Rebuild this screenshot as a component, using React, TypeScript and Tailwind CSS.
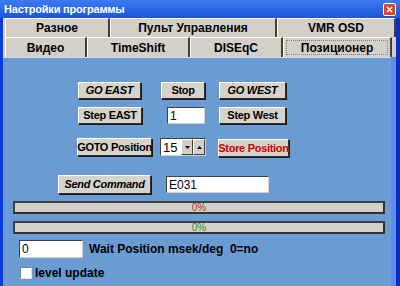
import React from 'react';

const font = { fontFamily: '"Liberation Sans", Arial, sans-serif' };

const Btn: React.FC<{ w: string; h?: string; italic?: boolean; red?: boolean; children: React.ReactNode; className?: string }> = ({
  w,
  h = 'h-[17px]',
  italic,
  red,
  children,
  className = '',
}) => (
  <button
    className={`${w} ${h} ${className} flex items-center justify-center whitespace-nowrap overflow-visible bg-[#d6d3cb] border border-t-white border-l-white border-r-[#303030] border-b-[#303030] shadow-[1px_1px_0_#1a1a1a] text-[11px] tracking-[-0.3px] font-bold leading-none ${
      italic ? 'italic' : ''
    } ${red ? 'text-[#d00000]' : 'text-black'}`}
  >
    {children}
  </button>
);

const Field: React.FC<{ w: string; h?: string; value: string; className?: string }> = ({ w, h = 'h-[17px]', value, className = '' }) => (
  <div
    className={`${w} ${h} ${className} bg-white border border-t-[#404040] border-l-[#404040] border-r-[#d0d0d0] border-b-[#d0d0d0] flex items-center pl-[2px] text-[12px] text-black leading-none`}
  >
    {value}
  </div>
);

const Tab: React.FC<{ w: string; label: string; active?: boolean }> = ({ w, label, active }) => (
  <div
    className={`${w} h-full flex items-center justify-center bg-[#d4d0c8] border-t border-l border-t-white border-l-white border-r-2 border-r-[#404040] text-[12px] font-bold text-black ${
      active ? 'p-[2px]' : ''
    }`}
  >
    {active ? (
      <div className="w-full h-full flex items-center justify-center border border-dotted border-[#8a8060]">{label}</div>
    ) : (
      label
    )}
  </div>
);

const Progress: React.FC<{ color: string }> = ({ color }) => (
  <div className="w-[372px] h-[13px] ml-[10px] bg-[#d4d0c8] border-2 border-t-[#404040] border-l-[#404040] border-r-[#303030] border-b-[#303030] flex items-center justify-center">
    <span className={`text-[10px] leading-none ${color}`}>0%</span>
  </div>
);

export default function App() {
  return (
    <div className="w-[400px] h-[286px] bg-[#0b3cd8] flex flex-col overflow-hidden" style={font}>
      <div className="h-[18px] flex items-center justify-between pl-[4px] pr-[4px] bg-gradient-to-b from-[#3d7bef] to-[#1d55dc]">
        <span className="text-[11px] font-bold text-white leading-none tracking-[-0.2px]">Настройки программы</span>
        <div className="w-[13px] h-[13px] bg-[#e0442a] border border-white rounded-[2px] flex items-center justify-center">
          <svg width="7" height="7" viewBox="0 0 7 7">
            <path d="M1 1 L6 6 M6 1 L1 6" stroke="white" strokeWidth="1.6" />
          </svg>
        </div>
      </div>
      <div className="flex-1 flex pl-[3px]">
        <div className="flex-1 flex flex-col">
          <div className="h-[39px] flex flex-col bg-[#d4d0c8] pl-[2px]">
            <div className="h-[19px] flex">
              <Tab w="w-[105px]" label="Разное" />
              <Tab w="w-[167px]" label="Пульт Управления" />
              <Tab w="w-[119px]" label="VMR OSD" />
            </div>
            <div className="h-[20px] flex">
              <Tab w="w-[82px]" label="Видео" />
              <Tab w="w-[103px]" label="TimeShift" />
              <Tab w="w-[93px]" label="DISEqC" />
              <Tab w="w-[109px]" label="Позиционер" active />
            </div>
          </div>
          <div className="flex-1 flex">
            <div className="flex-1 bg-[#6b9bd3] border-t border-t-[#c8dcf4] flex flex-col">
              <div className="flex mt-[24px] ml-[75px]">
                <Btn w="w-[63px]" italic>GO EAST</Btn>
                <Btn w="w-[44px]" className="ml-[20px]">Stop</Btn>
                <Btn w="w-[67px]" className="ml-[14px]" italic>GO WEST</Btn>
              </div>
              <div className="flex mt-[8px] ml-[75px]">
                <Btn w="w-[64px]">Step EAST</Btn>
                <Field w="w-[38px]" value="1" className="ml-[25px]" />
                <Btn w="w-[67px]" className="ml-[14px]">Step West</Btn>
              </div>
              <div className="flex mt-[14px] ml-[74px]">
                <Btn w="w-[75px]" h="h-[18px]">GOTO Position</Btn>
                <div className="ml-[8px] w-[46px] h-[18px] bg-white border border-t-[#404040] border-l-[#404040] border-r-[#d0d0d0] border-b-[#d0d0d0] flex items-center">
                  <span className="pl-[2px] text-[13px] text-black leading-none flex-1">15</span>
                  <div className="w-[12px] h-full bg-[#d4d0c8] border border-t-white border-l-white border-r-[#404040] border-b-[#404040] flex items-center justify-center">
                    <svg width="5" height="3" viewBox="0 0 5 3"><path d="M0 0 H5 L2.5 3 Z" fill="black" /></svg>
                  </div>
                  <div className="w-[12px] h-full bg-[#d4d0c8] border border-t-white border-l-white border-r-[#404040] border-b-[#404040] flex items-center justify-center">
                    <svg width="5" height="3" viewBox="0 0 5 3"><path d="M0 3 H5 L2.5 0 Z" fill="black" /></svg>
                  </div>
                </div>
                <Btn w="w-[71px]" h="h-[18px]" className="ml-[12px] mt-[1px]" red>Store Position</Btn>
              </div>
              <div className="flex items-start mt-[18px] ml-[55px]">
                <Btn w="w-[93px]" h="h-[19px]" italic>Send Command</Btn>
                <Field w="w-[103px]" value="E031" className="ml-[15px] mt-[1px]" />
              </div>
              <div className="mt-[7px]">
                <Progress color="text-[#a83a20]" />
              </div>
              <div className="mt-[7px]">
                <Progress color="text-[#2a8a2a]" />
              </div>
              <div className="flex items-center mt-[6px] ml-[16px]">
                <Field w="w-[64px]" h="h-[18px]" value="0" />
                <span className="ml-[6px] text-[12px] font-bold text-black leading-none">Wait Position msek/deg&nbsp;&nbsp;0=no</span>
              </div>
              <div className="flex items-center mt-[9px] ml-[17px]">
                <div className="w-[12px] h-[12px] bg-white border border-t-[#808080] border-l-[#808080] border-r-[#e0e0e0] border-b-[#e0e0e0]" />
                <span className="ml-[3px] text-[12px] font-bold text-black leading-none">level update</span>
              </div>
            </div>
            <div className="w-[5px] bg-[#5b8ef0]" />
          </div>
        </div>
        <div className="w-[4px] bg-[#0a2fc0]" />
      </div>
    </div>
  );
}
